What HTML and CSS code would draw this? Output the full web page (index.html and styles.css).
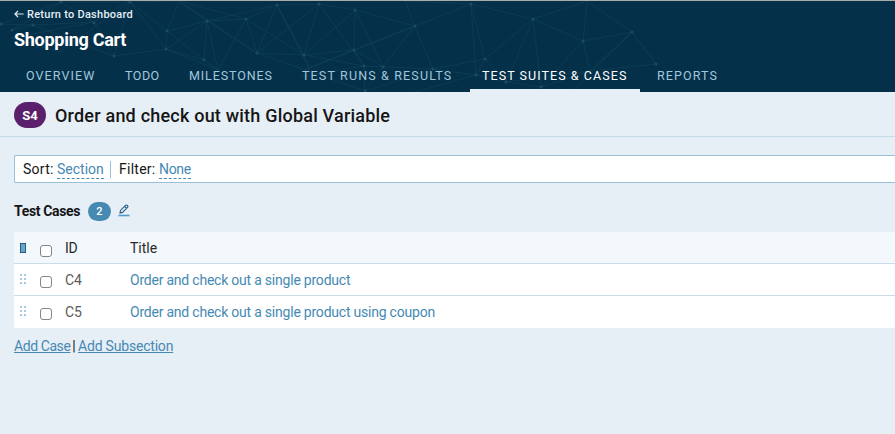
FILE: index.html
```
<!DOCTYPE html>
<html lang="en">
<head>
<meta charset="utf-8">
<title>Shopping Cart</title>
<link rel="stylesheet" href="styles.css">
</head>
<body>
<header class="top">
  <svg class="mesh" width="895" height="91" viewBox="0 1 895 91" aria-hidden="true">
    <path d="M0 24L61 2L94 22L130 0L114 56L94 22L33 25L0 24M33 25L12 30L61 2L130 2L179 1L167 31L130 2L166 49L114 56L33 25M12 38L94 22M10 38L60 52L130 2M179 1L207 21L246 19L277 5L207 21L166 49L167 31L207 21L204 60L167 31M207 21L218 70L204 60L166 49L218 70L246 19L257 53L277 5L304 55L246 19L179 1M179 1L257 53M207 21L257 53L304 55L319 4L257 53M319 4L277 5L310 70L304 55L355 10L319 4L364 66L354 50L355 10L383 67L354 50L304 55L364 66L383 67L415 26L355 10M415 26L304 70L354 50L415 26L471 4L405 1L415 26L433 69L365 91L364 66L300 77M257 53L365 91L383 67L433 69L476 75L415 92M471 4L485 59L476 75L471 4L533 19L485 59L433 69M533 19L506 82L485 59M533 19L541 87L506 82L476 75M533 19L583 41L587 1L533 19M583 41L541 87L590 71L583 41L632 32L587 1M632 32L656 64L590 71L632 32L572 91M590 71L506 82"/>
    <g class="nodes"><circle cx="61" cy="2" r="1.5"/><circle cx="33" cy="25" r="1.5"/><circle cx="12" cy="30" r="1.5"/><circle cx="1" cy="24" r="1.5"/><circle cx="94" cy="23" r="1.5"/><circle cx="114" cy="56" r="1.5"/><circle cx="130" cy="2" r="1.5"/><circle cx="167" cy="31" r="1.5"/><circle cx="166" cy="49" r="1.5"/><circle cx="207" cy="21" r="1.5"/><circle cx="204" cy="60" r="1.5"/><circle cx="246" cy="19" r="1.5"/><circle cx="277" cy="5" r="1.5"/><circle cx="257" cy="53" r="1.5"/><circle cx="304" cy="55" r="1.5"/><circle cx="319" cy="4" r="1.5"/><circle cx="355" cy="10" r="1.5"/><circle cx="354" cy="50" r="1.5"/><circle cx="364" cy="66" r="1.5"/><circle cx="383" cy="67" r="1.5"/><circle cx="415" cy="26" r="1.5"/><circle cx="433" cy="69" r="1.5"/><circle cx="365" cy="91" r="1.5"/><circle cx="471" cy="4" r="1.5"/><circle cx="476" cy="75" r="1.5"/><circle cx="485" cy="59" r="1.5"/><circle cx="506" cy="82" r="1.5"/><circle cx="533" cy="19" r="1.5"/><circle cx="541" cy="87" r="1.5"/><circle cx="583" cy="41" r="1.5"/><circle cx="632" cy="32" r="1.5"/><circle cx="656" cy="64" r="1.5"/></g>
  </svg>
  <a class="back"><svg width="10" height="8" viewBox="0 0 10 8"><path d="M9.5 4H1M4 1L1 4L4 7"/></svg><span>Return to Dashboard</span></a>
  <h1 class="project">Shopping Cart</h1>
  <nav class="tabs">
    <a class="tab overview">OVERVIEW</a>
    <a class="tab todo">TODO</a>
    <a class="tab milestones">MILESTONES</a>
    <a class="tab runs">TEST RUNS &amp; RESULTS</a>
    <a class="tab suites active">TEST SUITES &amp; CASES</a>
    <a class="tab reports">REPORTS</a>
  </nav>
</header>
<section class="heading">
  <span class="suite-id">S4</span>
  <h2 class="suite-title">Order and check out with Global Variable</h2>
</section>
<main class="content">
  <div class="filters">
    <span class="label sort">Sort:</span><a class="choice section">Section</a>
    <span class="divider"></span>
    <span class="label filter">Filter:</span><a class="choice none">None</a>
  </div>
  <div class="group">
    <h3 class="group-title">Test Cases</h3>
    <span class="count">2</span>
    <svg class="edit" width="12" height="13" viewBox="0 0 12 13"><path class="pen" d="M2 9L2.5 6.4L7.5 1.4Q8.4.6 9.4 1.5T9.5 3.4L4.5 8.4ZM6.6 2.4L8.6 4.4"/><path class="base" d="M.5 11.5H11.5"/></svg>
  </div>
  <div class="grid">
    <div class="row head">
      <span class="marker"></span><span class="box"></span><span class="id">ID</span><span class="title">Title</span>
    </div>
    <div class="row">
      <span class="grip"></span><span class="box"></span><span class="id">C4</span><a class="title link">Order and check out a single product</a>
    </div>
    <div class="row">
      <span class="grip"></span><span class="box"></span><span class="id">C5</span><a class="title link">Order and check out a single product using coupon</a>
    </div>
  </div>
  <div class="actions"><a class="add-case">Add Case</a><span class="bar">|</span><a class="add-sub">Add Subsection</a></div>
</main>
</body>
</html>
```
FILE: styles.css
```
* { box-sizing: border-box; }
body {
  margin: 0;
  height: 434px;
  overflow: hidden;
  background: #e6eef6;
  color: #151515;
  font: 14px/18px Roboto, sans-serif;
  white-space: nowrap;
}
h1, h2, h3 { margin: 0; }
.top {
  position: relative;
  height: 92px;
  border-top: 1px solid #aaaaaa;
  background: #043049;
  overflow: hidden;
}
.mesh { position: absolute; left: 0; top: 0; fill: none; stroke: #114059; stroke-width: .7; }
.nodes { fill: #1b4b62; stroke: none; }
.back {
  position: relative;
  display: flex;
  align-items: center;
  gap: 3px;
  height: 14px;
  margin: 6px 0 0 14px;
  color: #e6eef6;
  font-size: 11px;
  letter-spacing: .26px;
  font-weight: 500;
}
.back span { padding-top: 1px; }
.back svg { fill: none; stroke: #e6eef6; stroke-width: 1.2; }
.project {
  position: relative;
  margin: 8px 0 0 14px;
  height: 22px;
  color: #fff;
  font-size: 18px;
  line-height: 22px;
  letter-spacing: -.28px;
}
.tabs { position: relative; display: flex; gap: 5px; height: 34px; margin: 7px 0 0 14px; }
.tab {
  height: 34px;
  padding-left: 12px;
  color: #a1c7de;
  font-size: 12.5px;
  line-height: 36px;
  letter-spacing: 1.1px;
}
.overview { width: 94px; }
.todo { width: 59px; letter-spacing: .5px; }
.milestones { width: 108px; letter-spacing: .9px; }
.runs { width: 175px; letter-spacing: 1.15px; }
.suites { width: 170px; letter-spacing: 1.06px; }
.active { color: #fff; border-bottom: 3px solid #e6eef6; }
.heading {
  display: flex;
  align-items: center;
  gap: 9px;
  height: 45px;
  padding: 1px 0 0 14px;
  border-bottom: 1px solid #c0dde8;
}
.suite-id {
  width: 32px;
  height: 26px;
  border-radius: 13px;
  background: #5b206b;
  color: #fff;
  font-size: 13px;
  font-weight: 700;
  line-height: 27px;
  text-align: center;
}
.suite-title { font-size: 18px; line-height: 24px; font-weight: 500; letter-spacing: .21px; padding-top: 2px; }
.content { padding: 18px 0 0 14px; }
.filters {
  display: flex;
  align-items: center;
  height: 28px;
  padding-left: 8px;
  border: 1px solid #9ac0da;
  border-right: 0;
  border-radius: 2px 0 0 2px;
  background: #fff;
}
.label { margin-right: 3px; letter-spacing: .25px; }
.choice { color: #4689b3; height: 18px; line-height: 17px; border-bottom: 1px dashed #4689b3; margin-top: 2px; }
.sort { width: 31px; }
.section { width: 47px; }
.divider { width: 1px; height: 17px; margin: 0 8px 0 6px; background: #9ac0da; }
.filter { width: 37px; }
.none { width: 32px; letter-spacing: -.3px; }
.group { display: flex; align-items: center; height: 20px; margin-top: 18px; }
.group-title { width: 74px; font-size: 14px; line-height: 20px; letter-spacing: -.35px; }
.count {
  width: 23px;
  height: 19px;
  border-radius: 10px;
  background: #4689b3;
  color: #fff;
  font-size: 11px;
  font-weight: 500;
  line-height: 20px;
  text-align: center;
}
.edit { margin: -2px 0 0 7px; fill: none; }
.pen { stroke: #275d82; stroke-width: 1.1; }
.base { stroke: #4f9bcb; stroke-width: 1.6; }
.grid { margin-top: 11px; border-radius: 2px 0 0 2px; overflow: hidden; background: #fff; }
.row {
  display: grid;
  grid-template-columns: 20px 25px 65px 1fr;
  align-items: center;
  height: 32px;
  padding-left: 6px;
  border-bottom: 1px solid #c9dde8;
}
.row:last-child { border-bottom: 0; }
.head { background: #f3f8fc; }
.marker { width: 6px; height: 10px; border: 1px solid #255e82; background: #68a5ca; }
.box { width: 12px; height: 12px; border: 1px solid #858585; border-radius: 3px; background: #fff; margin-top: 4px; }
.head .box { margin-top: 6px; }
.id { color: #5b5b5b; letter-spacing: -.2px; }
.head .id, .head .title { color: #292929; }
.title { color: #4689b3; }
.link { letter-spacing: -.22px; }
.grip {
  width: 6px;
  height: 10px;
  margin-top: -2px;
  background: repeating-linear-gradient(to bottom, transparent 0 2px, #fff 2px 4px), linear-gradient(to right, #a8c9df 0 2px, #fff 2px 4px, #a8c9df 4px 6px);
}
.actions { display: flex; height: 18px; margin-top: 9px; }
.actions a { color: #4689b3; text-decoration: underline; }
.actions .add-case { width: 56px; letter-spacing: -.42px; }
.bar { width: 8px; text-align: center; }
.add-sub { letter-spacing: -.2px; }
```
